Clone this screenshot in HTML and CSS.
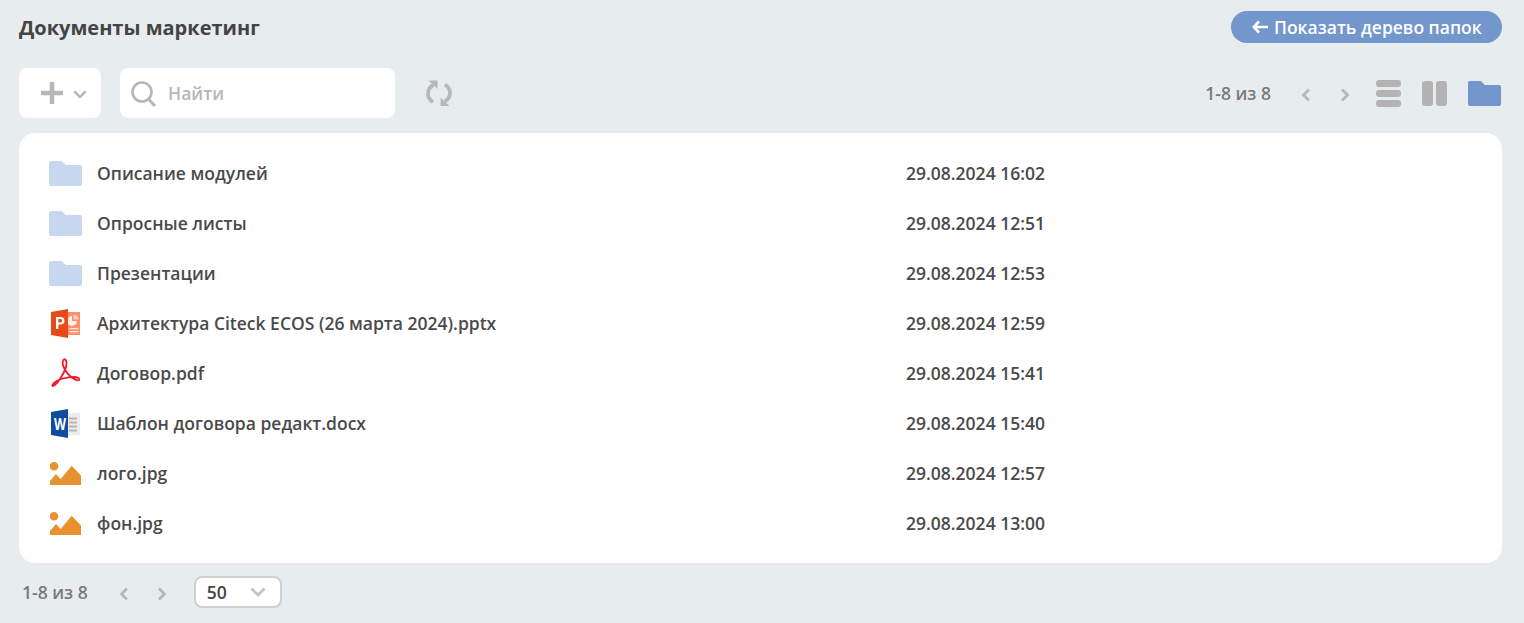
FILE: index.html
```html
<!DOCTYPE html>
<html lang="ru">
<head>
  <meta charset="UTF-8">
  <title>Документы маркетинг</title>
  <link rel="stylesheet" href="styles.css">
</head>

<body>
  <svg class="icon-defs" width="0" height="0">
    <symbol id="folder" viewBox="0 0 33 25">
      <path d="M2 0h10c.8 0 1.500.3 2 1l2.700 3H31c1.100 0 2 .9 2 2v17c0 1.100-.9 2-2 2H2c-1.100 0-2-.9-2-2V2C0 .9.900 0 2 0z"/>
    </symbol>
    <symbol id="image" viewBox="0 0 31 23">
      <circle cx="4" cy="4.300" r="4.300"/>
      <path d="M0 23v-4l6-7 4.700 5L21.700 3.700 31 13.500V23z"/>
    </symbol>
    <symbol id="chevron-left" viewBox="0 0 10 14">
      <path d="M8 1.500L2.500 7 8 12.500" fill="none" stroke="currentColor" stroke-width="2.800"/>
    </symbol>
    <symbol id="chevron-right" viewBox="0 0 10 14">
      <path d="M2 1.500L7.500 7 2 12.500" fill="none" stroke="currentColor" stroke-width="2.800"/>
    </symbol>
    <symbol id="chevron-down" viewBox="0 0 16 10">
      <path d="M1.500 1.500L8 8l6.500-6.500" fill="none" stroke="currentColor" stroke-width="2.800"/>
    </symbol>
  </svg>

  <!-- Header -->
  <header class="page-header">
    <h1 class="page-title">Документы маркетинг</h1>
    <button class="tree-button">
      <svg class="tree-button-icon" viewBox="0 0 16 14">
        <path d="M7 1.500L1.800 7 7 12.500M2 7h14" fill="none" stroke="currentColor" stroke-width="2.600"/>
      </svg>
      Показать дерево папок
    </button>
  </header>

  <!-- Toolbar -->
  <div class="toolbar">
    <button class="add-button">
      <svg class="add-icon" viewBox="0 0 22 22">
        <path d="M11 0v22M0 11h22" fill="none" stroke="currentColor" stroke-width="4.500"/>
      </svg>
      <svg class="add-chevron"><use href="#chevron-down"/></svg>
    </button>
    <div class="search-box">
      <svg class="search-icon" viewBox="0 0 26 26">
        <circle cx="11" cy="11" r="9.500" fill="none" stroke="currentColor" stroke-width="2.600"/>
        <path d="M17.500 18l6.500 7" fill="none" stroke="currentColor" stroke-width="3"/>
      </svg>
      <span class="search-placeholder">Найти</span>
    </div>
    <svg class="refresh-icon" viewBox="0 0 26 26">
      <path d="M7.500 5C3.500 7 2 10 2 13.500c0 3.500 1.800 6.500 5 8.500M18.500 21.500c4-2 5.500-5 5.500-8.500 0-3.500-1.800-6.500-5-8.500" fill="none" stroke="currentColor" stroke-width="3.800"/>
      <path d="M2.500 .5h9v8.500zM23.500 26h-9v-8.500z" fill="currentColor"/>
    </svg>

    <div class="toolbar-right">
      <span class="page-count">1-8 из 8</span>
      <svg class="page-arrow"><use href="#chevron-left"/></svg>
      <svg class="page-arrow"><use href="#chevron-right"/></svg>
      <div class="view-list">
        <span></span><span></span><span></span>
      </div>
      <div class="view-columns">
        <span></span><span></span>
      </div>
      <svg class="view-folder"><use href="#folder"/></svg>
    </div>
  </div>

  <!-- Files -->
  <main class="file-card">
    <div class="file-row">
      <svg class="file-icon folder-icon"><use href="#folder"/></svg>
      <span class="file-name">Описание модулей</span>
      <span class="file-date">29.08.2024 16:02</span>
    </div>
    <div class="file-row">
      <svg class="file-icon folder-icon"><use href="#folder"/></svg>
      <span class="file-name">Опросные листы</span>
      <span class="file-date">29.08.2024 12:51</span>
    </div>
    <div class="file-row">
      <svg class="file-icon folder-icon"><use href="#folder"/></svg>
      <span class="file-name">Презентации</span>
      <span class="file-date">29.08.2024 12:53</span>
    </div>
    <div class="file-row">
      <svg class="file-icon" viewBox="0 0 34 30">
        <rect x="17" y="4" width="14" height="23" fill="#ff8f6b"/>
        <path d="M23 8a5 5 0 1 0 5 5h-5z" fill="#fff" opacity=".85"/>
        <path d="M24.500 6.500a5 5 0 0 1 5 5h-5z" fill="#fff" opacity=".6"/>
        <path d="M20.500 20h9v1.300h-9zM20.500 23h9v1.300h-9z" fill="#fff" opacity=".8"/>
        <path d="M2 4L19 1v29L2 27z" fill="#e64a19"/>
        <path d="M7 9h4.500c2.500 0 4 1.500 4 3.700s-1.500 3.800-4 3.800H9.400V21H7zm2.400 2v3.500h1.900c1 0 1.800-.6 1.800-1.800 0-1.100-.8-1.700-1.800-1.700z" fill="#fff"/>
      </svg>
      <span class="file-name">Архитектура Citeck ECOS (26 марта 2024).pptx</span>
      <span class="file-date">29.08.2024 12:59</span>
    </div>
    <div class="file-row">
      <svg class="file-icon" viewBox="0 0 34 30">
        <path d="M3.500 28C8 27 12 20 15 14c2.500-5 3-9 2-11.500-1-2-3-1.500-3.300 1.500-.4 4 2.800 10 7.300 14 3 2.500 7 5 9 4 1-1.500-1-3-5-3-7 0-16 2-20 6-1.500 1.500-2 3-1.500 3z" fill="none" stroke="#ee1c2e" stroke-width="1.800"/>
      </svg>
      <span class="file-name">Договор.pdf</span>
      <span class="file-date">29.08.2024 15:41</span>
    </div>
    <div class="file-row">
      <svg class="file-icon" viewBox="0 0 34 30">
        <rect x="17" y="5" width="14" height="22" fill="#ececec"/>
        <path d="M20 9.500h8v2h-8zM20 13.500h8v2h-8zM20 17.500h8v2h-8zM20 21.500h8v2h-8z" fill="#b5b5b5"/>
        <path d="M2 4L19 1v29L2 27z" fill="#0f4c9e"/>
        <text class="word-letter" x="5" y="21.500" textLength="12" lengthAdjust="spacingAndGlyphs">W</text>
      </svg>
      <span class="file-name">Шаблон договора редакт.docx</span>
      <span class="file-date">29.08.2024 15:40</span>
    </div>
    <div class="file-row">
      <svg class="file-icon image-icon"><use href="#image"/></svg>
      <span class="file-name">лого.jpg</span>
      <span class="file-date">29.08.2024 12:57</span>
    </div>
    <div class="file-row">
      <svg class="file-icon image-icon"><use href="#image"/></svg>
      <span class="file-name">фон.jpg</span>
      <span class="file-date">29.08.2024 13:00</span>
    </div>
  </main>

  <!-- Footer -->
  <footer class="page-footer">
    <span class="page-count">1-8 из 8</span>
    <svg class="page-arrow"><use href="#chevron-left"/></svg>
    <svg class="page-arrow"><use href="#chevron-right"/></svg>
    <div class="page-size">
      <span>50</span>
      <svg class="page-size-chevron"><use href="#chevron-down"/></svg>
    </div>
  </footer>
</body>
</html>
```

FILE: styles.css
```css
* {
  margin: 0;
  padding: 0;
  box-sizing: border-box;
}

body {
  background: #e7ecef;
  font-family: "Open Sans", "Noto Sans", sans-serif;
  color: #444;
  height: 623px;
  padding: 11px 22px 0 19px;
  overflow: hidden;
}

.icon-defs {
  display: block;
}

.page-header {
  display: flex;
  justify-content: space-between;
  align-items: center;
  height: 32px;
}

.page-title {
  font-size: 20px;
  font-weight: 700;
  color: #444;
}

.tree-button {
  display: flex;
  align-items: center;
  gap: 6px;
  width: 271px;
  height: 32px;
  padding-left: 21px;
  border: none;
  border-radius: 16px;
  background: #7396cd;
  color: #fff;
  font-family: inherit;
  font-size: 17.5px;
  font-weight: 600;
}

.tree-button-icon {
  width: 16px;
  height: 14px;
}

.toolbar {
  display: flex;
  align-items: center;
  height: 50px;
  margin-top: 25px;
}

.add-button {
  display: flex;
  align-items: center;
  width: 82px;
  height: 50px;
  padding-left: 22px;
  gap: 10px;
  border: none;
  border-radius: 8px;
  background: #fff;
  color: #b7b7b7;
}

.add-icon {
  width: 22px;
  height: 22px;
}

.add-chevron {
  width: 14px;
  height: 9px;
  margin-top: 2px;
}

.search-box {
  display: flex;
  align-items: center;
  gap: 11px;
  width: 275px;
  height: 50px;
  margin-left: 19px;
  padding-left: 11px;
  border-radius: 8px;
  background: #fff;
  color: #b7b7b7;
}

.search-icon {
  width: 26px;
  height: 26px;
  margin-top: 2px;
}

.search-placeholder {
  font-size: 17.5px;
  font-weight: 600;
}

.refresh-icon {
  width: 26px;
  height: 26px;
  margin-left: 31px;
  color: #b7b7b7;
}

.toolbar-right {
  display: flex;
  align-items: center;
  margin-left: auto;
  padding-right: 1px;
}

.page-count {
  font-size: 17.5px;
  font-weight: 600;
  color: #7a7a7a;
}

.page-arrow {
  width: 10px;
  height: 14px;
  margin-top: 3px;
  margin-left: 29px;
  color: #b7b7b7;
}

.page-count + .page-arrow {
  margin-left: 30px;
}

.view-list {
  display: flex;
  flex-direction: column;
  gap: 3px;
  width: 25px;
  margin-left: 26px;
}

.view-list span {
  height: 7px;
  border-radius: 3px;
  background: #b3b3b3;
}

.view-columns {
  display: flex;
  gap: 3px;
  margin-left: 21px;
}

.view-columns span {
  width: 11px;
  height: 25px;
  border-radius: 3px;
  background: #b3b3b3;
}

.view-folder {
  width: 33px;
  height: 25px;
  margin-left: 21px;
  fill: #7396cd;
}

.file-card {
  height: 430px;
  margin-top: 15px;
  padding: 15px 30px;
  border-radius: 16px;
  background: #fff;
}

.file-row {
  display: flex;
  align-items: center;
  height: 50px;
}

.file-icon {
  flex-shrink: 0;
  width: 34px;
  height: 30px;
  margin-right: 14px;
}

.folder-icon {
  width: 33px;
  height: 25px;
  margin-top: 1px;
  margin-right: 15px;
  fill: #c7d7f0;
}

.image-icon {
  width: 31px;
  height: 23px;
  margin-left: 1px;
  margin-right: 16px;
  fill: #e8922f;
}

.word-letter {
  font-family: "Open Sans", sans-serif;
  font-size: 16px;
  font-weight: 700;
  fill: #fff;
}

.file-name {
  width: 809px;
  font-size: 17.5px;
  font-weight: 600;
  color: #4a4a4a;
}

.file-date {
  font-size: 17.5px;
  font-weight: 600;
  color: #4a4a4a;
}

.page-footer {
  display: flex;
  align-items: center;
  height: 32px;
  margin-top: 13px;
  padding-left: 3px;
}

.page-footer .page-arrow {
  margin-left: 28px;
}

.page-footer .page-count + .page-arrow {
  margin-left: 31px;
}

.page-size {
  display: flex;
  align-items: center;
  justify-content: space-between;
  width: 88px;
  height: 32px;
  margin-left: 27px;
  padding: 0 14px 0 11px;
  border: 2px solid #cfcfcf;
  border-radius: 8px;
  background: #fff;
  font-size: 17.5px;
  font-weight: 600;
  color: #444;
}

.page-size-chevron {
  width: 16px;
  height: 10px;
  color: #c4c4c4;
}
```
